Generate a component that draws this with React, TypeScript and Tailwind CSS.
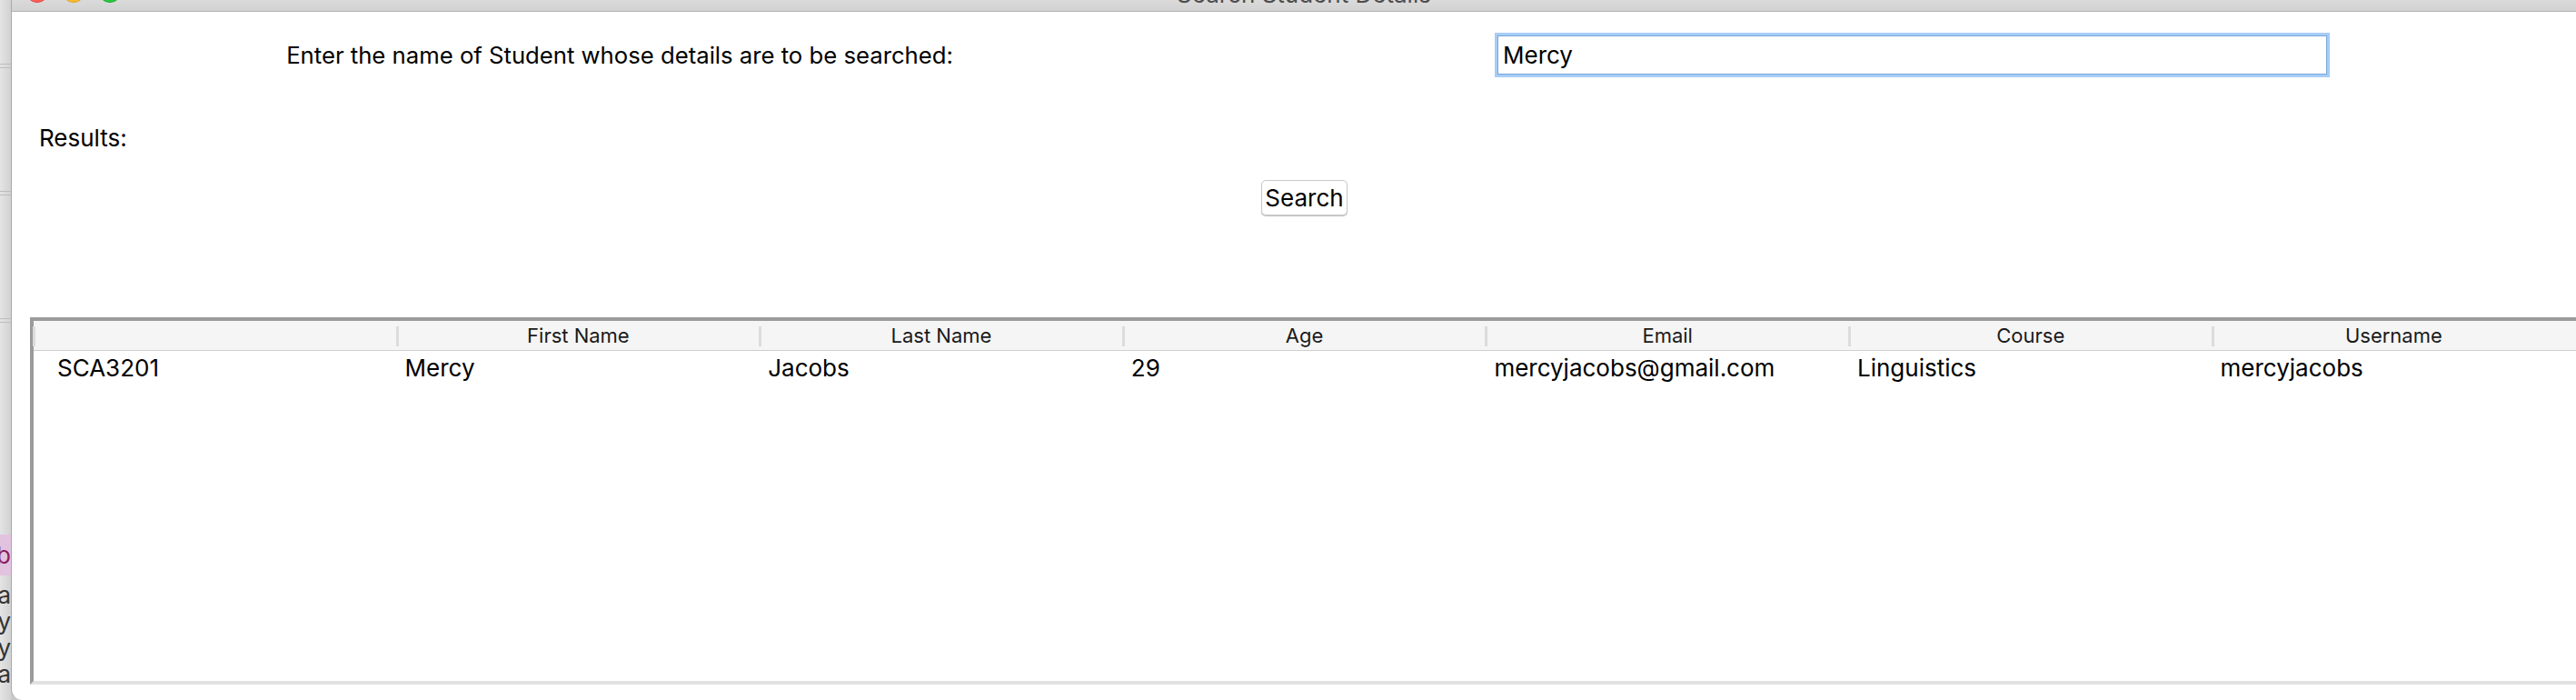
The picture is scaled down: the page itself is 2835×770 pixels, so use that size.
import React from "react";

const cols = ["", "First Name", "Last Name", "Age", "Email", "Course", "Username"];
const row = ["SCA3201", "Mercy", "Jacobs", "29", "mercyjacobs@gmail.com", "Linguistics", "mercyjacobs"];

export default function App() {
  return (
    <div className="w-[2835px] h-[770px] flex bg-[#c9c9c9] overflow-hidden font-['Inter',sans-serif] text-black">
      {/* background window strip */}
      <div className="w-[12px] h-full relative overflow-hidden bg-gradient-to-r from-[#e4e4e4] to-[#d2d2d2] shrink-0">
        <div className="absolute left-0 right-0 top-[70px] h-[5px] border-y border-[#bdbdbd]" />
        <div className="absolute left-0 right-0 top-[210px] h-[5px] border-y border-[#bdbdbd]" />
        <div className="absolute left-0 right-0 top-[350px] h-[5px] border-y border-[#bdbdbd]" />
        <div className="absolute left-0 right-0 top-[588px] h-[45px] bg-[#e2c3df] flex items-center justify-end">
          <span className="text-[26px] text-[#8a1d5e] whitespace-nowrap leading-none">Job</span>
        </div>
        <div className="absolute right-0 top-[640px] flex flex-col items-end text-[26px] leading-[29px] text-[#333] whitespace-nowrap">
          <span>ta</span>
          <span>ry</span>
          <span>ry</span>
          <span>ta</span>
        </div>
      </div>

      {/* main window */}
      <div className="flex-1 h-full flex flex-col bg-white border-l border-[#a9a9a9] rounded-bl-[12px] overflow-hidden">
        {/* title bar */}
        <div className="h-[13px] shrink-0 relative overflow-hidden bg-gradient-to-b from-[#dadada] to-[#d2d2d2] border-b border-[#b3b3b3]">
          <div className="absolute left-[15px] top-[-23px] w-[26px] h-[26px] rounded-full bg-[#fe5f57] border border-[#e0443e]" />
          <div className="absolute left-[55px] top-[-23px] w-[26px] h-[26px] rounded-full bg-[#febc2e] border border-[#dea123]" />
          <div className="absolute left-[95px] top-[-23px] w-[26px] h-[26px] rounded-full bg-[#28c840] border border-[#1aab29]" />
          <div className="absolute left-0 right-0 top-[-19px] flex justify-center">
            <span className="ml-[22px] text-[26px] leading-[26px] text-[#4d4d4d]">Search Student Details</span>
          </div>
        </div>

        {/* content */}
        <div className="flex-1 flex flex-col">
          {/* search row */}
          <div className="flex items-center mt-[23px] h-[49px]">
            <div className="w-[1338px] flex justify-center">
              <span className="text-[25.7px] leading-[30px]">Enter the name of Student whose details are to be searched:</span>
            </div>
            <div className="ml-[294px] w-[919px] h-[49px] border-[3px] border-[#a6cdf6] bg-white">
              <div className="w-full h-full border border-[#7ba6d6] flex items-center pl-[5px]">
                <span className="text-[26px] leading-[30px]">Mercy</span>
              </div>
            </div>
          </div>

          {/* results label */}
          <div className="mt-[52px] pl-[30px] h-[30px] flex items-center">
            <span className="text-[26px] leading-[30px]">Results:</span>
          </div>

          {/* search button */}
          <div className="mt-[31px] pl-[1375px]">
            <button className="w-[95px] h-[39px] rounded-[5px] bg-white border border-[#c9c9c9] shadow-[0_1px_1px_rgba(0,0,0,0.25)] flex items-center justify-center text-[26px] leading-[30px]">
              Search
            </button>
          </div>

          {/* table */}
          <div className="mt-[112px] ml-[20px] flex-1 mb-[17px] flex flex-col border-t-[4px] border-l-[4px] border-b-[4px] border-t-[#9b9b9b] border-l-[#9b9b9b] border-b-[#e2e2e2]">
            <div className="h-[33px] flex bg-[#f5f5f5] border-b border-[#cfcfcf] shrink-0">
              {cols.map((c, i) => (
                <div key={i} className="w-[399.6px] shrink-0 relative flex items-center justify-center">
                  <div className="absolute left-[-1px] top-[6px] w-[3px] h-[22px] bg-[#dcdcdc]" />
                  <span className="text-[22px] leading-[26px] text-[#1a1a1a]">{c}</span>
                </div>
              ))}
            </div>
            <div className="h-[38px] flex items-center shrink-0">
              {row.map((v, i) => (
                <div key={i} className={`w-[399.6px] shrink-0 ${i === 0 ? "pl-[26px]" : "pl-[9px]"}`}>
                  <span className="text-[26px] leading-[30px]">{v}</span>
                </div>
              ))}
            </div>
            <div className="flex-1 bg-white" />
          </div>
        </div>
      </div>
    </div>
  );
}
